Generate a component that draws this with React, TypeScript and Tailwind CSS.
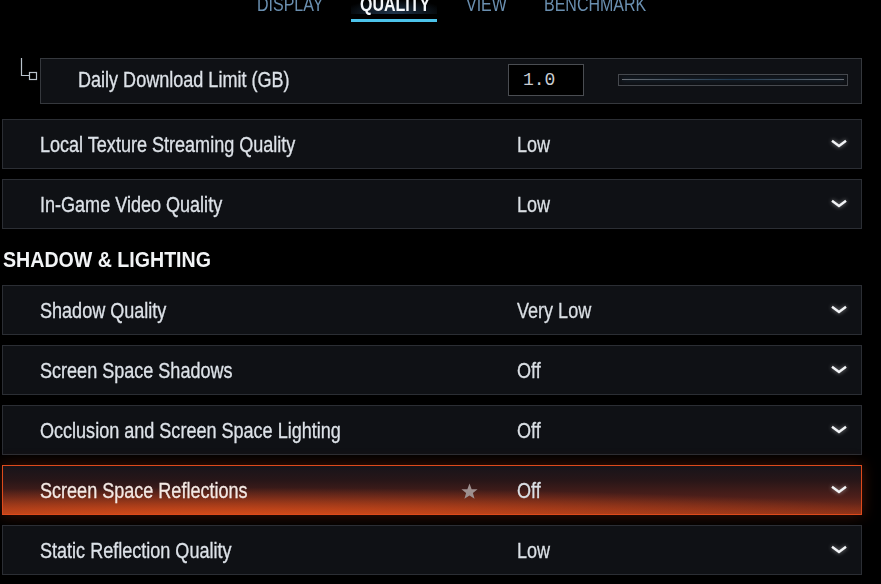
import React from "react";

const SANS = "font-['Liberation_Sans',Arial,sans-serif]";
const SQUEEZE = "inline-block origin-left scale-x-[0.82] whitespace-nowrap [-webkit-text-stroke:0.3px_currentColor]";

function Chevron() {
  return (
    <svg width="16" height="9" viewBox="0 0 16 9" className="drop-shadow-[0_0_2px_rgba(255,255,255,0.5)]">
      <path d="M1 1.8 L8 7 L15 1.8" fill="none" stroke="#f2f4f6" strokeWidth="2.4" strokeLinejoin="miter" />
    </svg>
  );
}

function Star() {
  return (
    <svg width="19" height="19" viewBox="0 0 24 24">
      <path
        d="M12 2 L14.7 9.1 L22.2 9.3 L16.3 13.9 L18.4 21.2 L12 17 L5.6 21.2 L7.7 13.9 L1.8 9.3 L9.3 9.1 Z"
        fill="#9d8f8f"
      />
    </svg>
  );
}

type RowProps = { label: string; value: string; highlight?: boolean };

function Row({ label, value, highlight }: RowProps) {
  const base = "relative flex h-[50px] items-center border pt-[3px]";
  const normal = "border-[#2b2e34] bg-[#0f1115]";
  const hl =
    "border-[#de4a1c] shadow-[0_0_14px_rgba(190,60,20,0.35)] [background-image:radial-gradient(ellipse_85%_65%_at_25%_110%,rgba(236,84,26,0.85),rgba(236,84,26,0)_100%),linear-gradient(to_bottom,#17141a_0%,#281618_30%,#4e1f1a_65%,#8a3118_100%)]";
  return (
    <div className={`${base} ${highlight ? hl : normal}`}>
      <div className="flex w-[514px] items-center justify-between pl-[37px] pr-[38px]">
        <span className={`${SANS} ${SQUEEZE} text-[22px] leading-none ${highlight ? "text-[#f3e9e4]" : "text-[#dde2e8]"}`}>
          {label}
        </span>
        {highlight ? <Star /> : null}
      </div>
      <span className={`${SANS} ${SQUEEZE} text-[22px] leading-none text-[#dadfe4]`}>{value}</span>
      <div className="ml-auto mr-[14px] flex items-center pb-[3px]">
        <Chevron />
      </div>
    </div>
  );
}

export default function App() {
  const tabs: { t: string; w: string; p: string }[] = [
    { t: "DISPLAY", w: "w-[86px]", p: "pl-[9px]" },
    { t: "QUALITY", w: "w-[86px]", p: "pl-[9px]" },
    { t: "VIEW", w: "w-[63px]", p: "pl-[12px]" },
    { t: "BENCHMARK", w: "w-[122px]", p: "pl-[10px]" },
  ];
  return (
    <div className="h-[584px] w-[881px] overflow-hidden bg-black">
      {/* Tabs */}
      <div className="-mt-[6px] flex gap-[17px] pl-[248px]">
        {tabs.map(({ t, w, p }) => {
          const active = t === "QUALITY";
          return (
            <div key={t} className={`flex flex-col items-stretch ${w}`}>
              <div
                className={`${SANS} h-[20px] ${p} text-[20px] leading-none ${
                  active
                    ? "font-bold text-[#f4f7fa] [background-image:radial-gradient(ellipse_60%_70%_at_50%_95%,rgba(70,120,170,0.45),rgba(0,0,0,0)_100%)]"
                    : "text-[#6a8fb0]"
                }`}
              >
                <span className="inline-block origin-left scale-x-[0.8] whitespace-nowrap">{t}</span>
              </div>
              <div className={`mt-[5px] h-[2.5px] ${active ? "bg-[#4cc3ea]" : "bg-transparent"}`} />
            </div>
          );
        })}
      </div>

      <div className="ml-[2px] flex w-[860px] flex-col">
        {/* Sub row */}
        <div className="mt-[36px] flex">
          <div className="w-[38px]">
            <svg width="38" height="46" viewBox="0 0 38 46">
              <path d="M19.5 0 V17.5 H27" fill="none" stroke="#b9c3cc" strokeWidth="1.2" />
              <rect x="27.5" y="14.5" width="7" height="7" fill="none" stroke="#b9c3cc" strokeWidth="1.2" />
            </svg>
          </div>
          <div className="flex h-[46px] flex-1 items-center border border-[#35383d] bg-[#0f1115] pb-[2px]">
            <div className="w-[467px] pl-[37px] pt-[2px]">
              <span className={`${SANS} ${SQUEEZE} text-[22px] leading-none text-[#dde2e8]`}>Daily Download Limit (GB)</span>
            </div>
            <div className="flex h-[32px] w-[76px] items-center border border-[#4a4d52] bg-black pl-[14px] font-['Liberation_Mono',monospace] text-[18px] leading-none text-[#c9cdd2]">
              1.0
            </div>
            <div className="ml-[34px] flex h-[12px] w-[230px] items-center border border-[#46494e] px-[3px]">
              <div className="h-[1px] w-full bg-[linear-gradient(to_right,#6a6e74,#1f3a52_50%,#6a6e74)] shadow-[0_0_4px_rgba(60,110,150,0.6)]" />
            </div>
          </div>
        </div>

        <div className="mt-[15px] flex flex-col gap-[10px]">
          <Row label="Local Texture Streaming Quality" value="Low" />
          <Row label="In-Game Video Quality" value="Low" />
          <div className={`flex h-[36px] items-center pl-[1px] pt-[4px] ${SANS} text-[20px] font-bold leading-none text-[#f2f4f6]`}>
            <span className="inline-block origin-left scale-x-[0.98] scale-y-[1.08]">SHADOW &amp; LIGHTING</span>
          </div>
          <Row label="Shadow Quality" value="Very Low" />
          <Row label="Screen Space Shadows" value="Off" />
          <Row label="Occlusion and Screen Space Lighting" value="Off" />
          <Row label="Screen Space Reflections" value="Off" highlight />
          <Row label="Static Reflection Quality" value="Low" />
        </div>
      </div>
    </div>
  );
}
